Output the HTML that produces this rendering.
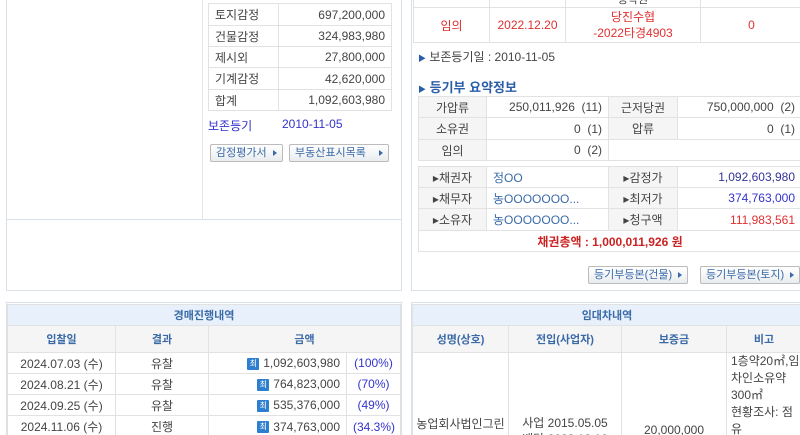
<!DOCTYPE html><html><head><meta charset="utf-8"><style>
*{margin:0;padding:0;box-sizing:border-box}
html,body{width:800px;height:435px;overflow:hidden;background:#fff}
body{font-family:"Liberation Sans","Noto Sans CJK KR",sans-serif;font-size:12px;color:#444;position:relative}
#w{position:absolute;left:0;top:0;width:800px;height:435px;overflow:hidden}
.a{position:absolute}
table{border-collapse:collapse;position:absolute;table-layout:fixed}
td{border:1px solid #e2e2e2;padding:0 6px;white-space:nowrap;overflow:hidden}
.r{text-align:right}.c{text-align:center}
.g{background:#f5f5f5}
.btn{position:absolute;height:18px;border:1px solid #bbb;border-radius:2px;background:linear-gradient(#fff,#e9ecef);color:#3a6aa8;font-size:11px;line-height:16px;padding-left:5px}
.btn:after{content:"";position:absolute;right:5px;top:5px;border-left:4px solid #3a6aa8;border-top:3px solid transparent;border-bottom:3px solid transparent}
.blue{color:#3333cc}.red{color:#e03030}
.hd{background:#e8f1fb;color:#3a6aa8;font-weight:bold;text-align:center;font-size:11px}
.ch{background:#f5f5f5;color:#3a6aa8;font-weight:bold;text-align:center;font-size:11px}
.ico{display:inline-block;width:12px;height:12px;background:#2f7fd0;color:#fff;font-size:8px;line-height:12px;text-align:center;vertical-align:middle;margin-right:4px;border-radius:1px}
</style></head><body><div id="w">
<div class="a" style="left:6px;top:-2px;width:396px;height:293px;border:1px solid #d9e0e8"></div>
<div class="a" style="left:6px;top:219px;width:396px;border-top:1px solid #d9e0e8"></div>
<div class="a" style="left:202px;top:0;height:219px;border-left:1px solid #e3e6ea"></div>
<table style="left:208px;top:3px;width:184px">
<col style="width:70px"><col>
<tr style="height:22px"><td>토지감정</td><td class="r">697,200,000</td></tr>
<tr style="height:21px"><td>건물감정</td><td class="r">324,983,980</td></tr>
<tr style="height:21px"><td>제시외</td><td class="r">27,800,000</td></tr>
<tr style="height:22px"><td>기계감정</td><td class="r">42,620,000</td></tr>
<tr style="height:21px"><td>합계</td><td class="r">1,092,603,980</td></tr>
</table>
<div class="a blue" style="left:208px;top:117px">보존등기</div>
<div class="a blue" style="left:282px;top:117px">2010-11-05</div>
<div class="btn" style="left:210px;top:144px;width:73px">감정평가서</div>
<div class="btn" style="left:289px;top:144px;width:100px">부동산표시목록</div>

<div class="a" style="left:411px;top:-2px;width:392px;height:293px;border:1px solid #d9e0e8"></div>
<table style="left:413px;top:-15px;width:390px">
<col style="width:76px"><col style="width:76px"><col style="width:135px"><col>
<tr style="height:22px"><td></td><td></td><td class="c" style="vertical-align:bottom;font-size:11px">공탁권</td><td></td></tr>
<tr style="height:35px" class="red"><td class="c">임의</td><td class="c">2022.12.20</td><td class="c" style="line-height:16px">당진수협<br>-2022타경4903</td><td class="c">0</td></tr>
</table>
<div class="a" style="left:418px;top:48px"><span style="color:#2b5ea8;font-size:8px">▶</span> 보존등기일 : 2010-11-05</div>
<div class="a" style="left:418px;top:77px;color:#2b5ea8;font-weight:bold;font-size:13px"><span style="font-size:8px">▶</span> 등기부 요약정보</div>
<table style="left:418px;top:96px;width:384px">
<col style="width:68px"><col style="width:122px"><col style="width:69px"><col>
<tr style="height:21px"><td class="g c">가압류</td><td class="r">250,011,926 &nbsp;(11)</td><td class="g c">근저당권</td><td class="r">750,000,000 &nbsp;(2)</td></tr>
<tr style="height:22px"><td class="g c">소유권</td><td class="r">0 &nbsp;(1)</td><td class="g c">압류</td><td class="r">0 &nbsp;(1)</td></tr>
<tr style="height:21px"><td class="g c">임의</td><td class="r">0 &nbsp;(2)</td><td colspan="2"></td></tr>
</table>
<table style="left:418px;top:166px;width:384px">
<col style="width:68px"><col style="width:122px"><col style="width:69px"><col>
<tr style="height:21px"><td class="g c">▸채권자</td><td style="color:#3a6aa8">정OO</td><td class="g c">▸감정가</td><td class="r" style="color:#333399">1,092,603,980</td></tr>
<tr style="height:21px"><td class="g c">▸채무자</td><td style="color:#3a6aa8">농OOOOOOO...</td><td class="g c">▸최저가</td><td class="r blue">374,763,000</td></tr>
<tr style="height:22px"><td class="g c">▸소유자</td><td style="color:#3a6aa8">농OOOOOOO...</td><td class="g c">▸청구액</td><td class="r red">111,983,561</td></tr>
<tr style="height:21px"><td colspan="4" class="c" style="color:#cc2222;font-weight:bold">채권총액 : 1,000,011,926 원</td></tr>
</table>
<div class="btn" style="left:588px;top:266px;width:100px">등기부등본(건물)</div>
<div class="btn" style="left:700px;top:266px;width:100px">등기부등본(토지)</div>

<div class="a" style="left:6px;top:302px;width:396px;height:160px;border:1px solid #d9e0e8"></div>
<table style="left:7px;top:304px;width:394px">
<col style="width:108px"><col style="width:93px"><col style="width:138px"><col>
<tr style="height:21px"><td colspan="4" class="hd">경매진행내역</td></tr>
<tr style="height:27px"><td class="ch">입찰일</td><td class="ch">결과</td><td class="ch" colspan="2">금액</td></tr>
<tr style="height:21px"><td class="c">2024.07.03 (수)</td><td class="c">유찰</td><td class="r"><span class="ico">최</span>1,092,603,980</td><td class="c blue">(100%)</td></tr>
<tr style="height:21px"><td class="c">2024.08.21 (수)</td><td class="c">유찰</td><td class="r"><span class="ico">최</span>764,823,000</td><td class="c blue">(70%)</td></tr>
<tr style="height:21px"><td class="c">2024.09.25 (수)</td><td class="c">유찰</td><td class="r"><span class="ico">최</span>535,376,000</td><td class="c blue">(49%)</td></tr>
<tr style="height:22px"><td class="c">2024.11.06 (수)</td><td class="c">진행</td><td class="r"><span class="ico">최</span>374,763,000</td><td class="c blue">(34.3%)</td></tr>
</table>

<div class="a" style="left:411px;top:302px;width:392px;height:160px;border:1px solid #d9e0e8"></div>
<table style="left:412px;top:304px;width:390px">
<col style="width:96px"><col style="width:113px"><col style="width:105px"><col>
<tr style="height:21px"><td colspan="4" class="hd">임대차내역</td></tr>
<tr style="height:27px"><td class="ch">성명(상호)</td><td class="ch">전입(사업자)</td><td class="ch">보증금</td><td class="ch">비고</td></tr>
<tr style="height:120px"><td class="c" style="vertical-align:top;padding:62px 2px 0;white-space:normal;line-height:18px">농업회사법인그린비</td><td class="c" style="vertical-align:top;padding-top:62px;line-height:16px">사업 2015.05.05<br>배당 2022.12.16</td><td class="c" style="vertical-align:top;padding-top:70px">20,000,000</td><td style="vertical-align:top;line-height:17px;padding:0 4px">1층약20㎡,임<br>차인소유약<br>300㎡<br>현황조사: 점<br>유</td></tr>
</table>
</div></body></html>
